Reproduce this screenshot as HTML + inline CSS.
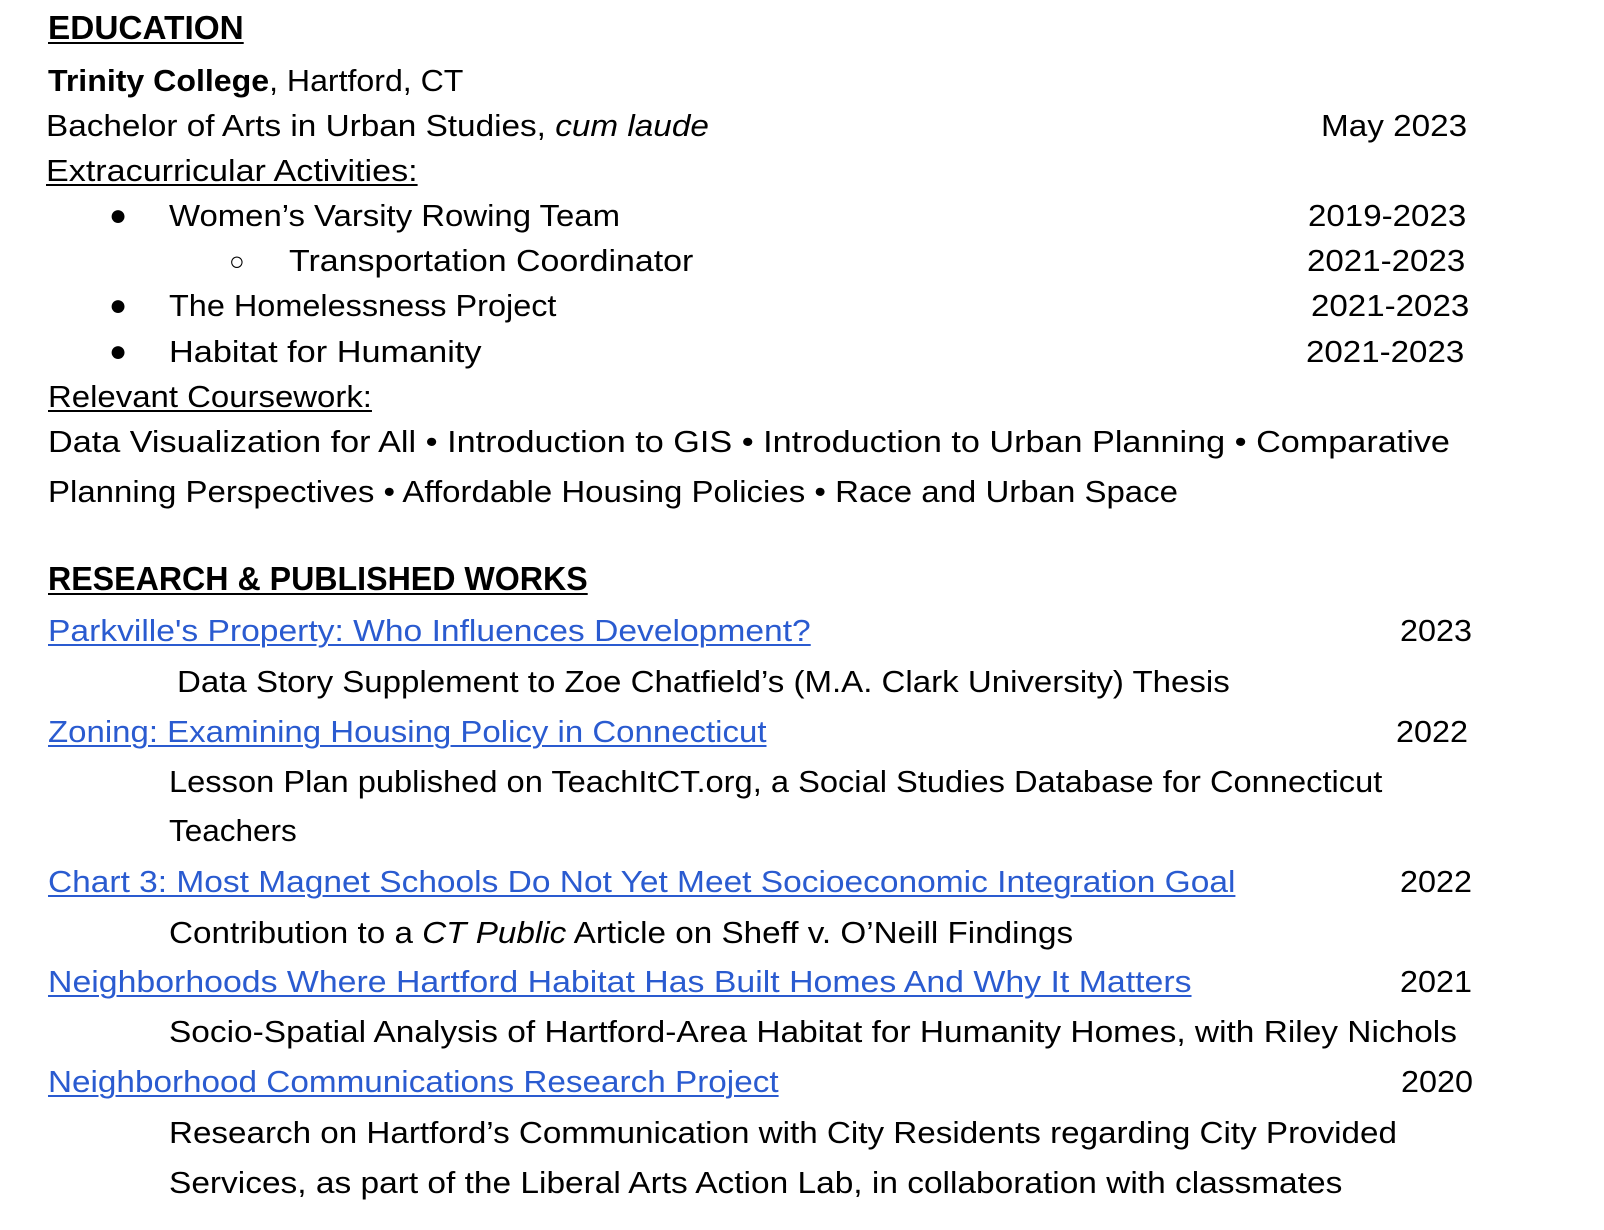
<!DOCTYPE html>
<html><head><meta charset="utf-8">
<style>
html,body{margin:0;padding:0;background:#fff;width:1604px;height:1230px;overflow:hidden}
body{position:relative;font-family:"Liberation Sans",Arial,sans-serif;font-size:31px;color:#000}
.l{position:absolute;white-space:nowrap;line-height:44px;height:44px;display:inline-block;transform-origin:left center}
.r{position:absolute;white-space:nowrap;line-height:44px;height:44px;display:inline-block;transform-origin:right center}
.h{font-weight:bold;font-size:33px}
u{text-decoration-thickness:2px;text-underline-offset:3px}
a{color:#2a5bd0;text-decoration:underline;text-decoration-thickness:2px;text-underline-offset:3px}
.b{position:absolute;line-height:44px;height:44px}
</style></head><body>
<div class="l h" style="left:48px;top:6px" w="196"><u>EDUCATION</u></div>
<div class="l" style="left:48px;top:59px" w="415"><b>Trinity College</b>, Hartford, CT</div>
<div class="l" style="left:46px;top:104px" w="663">Bachelor of Arts in Urban Studies, <i>cum laude</i></div>
<div class="r" style="right:137px;top:104px" w="146">May 2023</div>
<div class="l" style="left:46px;top:149px" w="372"><u>Extracurricular Activities:</u></div>
<div class="b" style="left:109px;top:194px;font-size:30px">●</div>
<div class="l" style="left:169px;top:194px" w="451">Women’s Varsity Rowing Team</div>
<div class="r" style="right:138px;top:194px" w="158">2019-2023</div>
<div class="b" style="left:229px;top:239px;font-size:26px">○</div>
<div class="l" style="left:289px;top:239px" w="404">Transportation Coordinator</div>
<div class="r" style="right:139px;top:239px" w="158">2021-2023</div>
<div class="b" style="left:109px;top:284px;font-size:30px">●</div>
<div class="l" style="left:169px;top:284px" w="387">The Homelessness Project</div>
<div class="r" style="right:135px;top:284px" w="158">2021-2023</div>
<div class="b" style="left:109px;top:330px;font-size:30px">●</div>
<div class="l" style="left:169px;top:330px" w="313">Habitat for Humanity</div>
<div class="r" style="right:140px;top:330px" w="158">2021-2023</div>
<div class="l" style="left:48px;top:375px" w="324"><u>Relevant Coursework:</u></div>
<div class="l" style="left:48px;top:420px" w="1402">Data Visualization for All • Introduction to GIS • Introduction to Urban Planning • Comparative</div>
<div class="l" style="left:48px;top:470px" w="1130">Planning Perspectives • Affordable Housing Policies • Race and Urban Space</div>
<div class="l h" style="left:48px;top:557px" w="540"><u>RESEARCH &amp; PUBLISHED WORKS</u></div>
<div class="l" style="left:48px;top:609px" w="763"><a>Parkville's Property: Who Influences Development?</a></div>
<div class="r" style="right:132px;top:609px" w="72">2023</div>
<div class="l" style="left:177px;top:660px" w="1053">Data Story Supplement to Zoe Chatfield’s (M.A. Clark University) Thesis</div>
<div class="l" style="left:48px;top:710px" w="718"><a>Zoning: Examining Housing Policy in Connecticut</a></div>
<div class="r" style="right:136px;top:710px" w="72">2022</div>
<div class="l" style="left:169px;top:760px" w="1213">Lesson Plan published on TeachItCT.org, a Social Studies Database for Connecticut</div>
<div class="l" style="left:169px;top:809px" w="128">Teachers</div>
<div class="l" style="left:48px;top:860px" w="1187"><a>Chart 3: Most Magnet Schools Do Not Yet Meet Socioeconomic Integration Goal</a></div>
<div class="r" style="right:132px;top:860px" w="72">2022</div>
<div class="l" style="left:169px;top:911px" w="904">Contribution to a <i>CT Public</i> Article on Sheff v. O’Neill Findings</div>
<div class="l" style="left:48px;top:960px" w="1144"><a>Neighborhoods Where Hartford Habitat Has Built Homes And Why It Matters</a></div>
<div class="r" style="right:132px;top:960px" w="72">2021</div>
<div class="l" style="left:169px;top:1010px" w="1288">Socio-Spatial Analysis of Hartford-Area Habitat for Humanity Homes, with Riley Nichols</div>
<div class="l" style="left:48px;top:1060px" w="731"><a>Neighborhood Communications Research Project</a></div>
<div class="r" style="right:131px;top:1060px" w="72">2020</div>
<div class="l" style="left:169px;top:1111px" w="1228">Research on Hartford’s Communication with City Residents regarding City Provided</div>
<div class="l" style="left:169px;top:1161px" w="1173">Services, as part of the Liberal Arts Action Lab, in collaboration with classmates</div>
<script>
document.querySelectorAll('[w]').forEach(function(e){
  var w=parseFloat(e.getAttribute('w'));var c=e.offsetWidth;
  if(c>0)e.style.transform='scaleX('+(w/c)+')';
});
</script>
</body></html>
